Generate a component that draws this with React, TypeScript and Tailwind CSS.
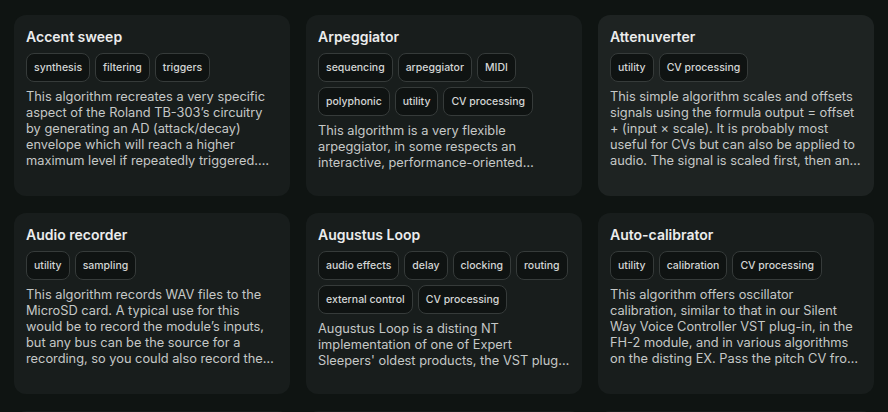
import React from "react";

type Card = { title: string; tags: string[]; desc: string; lines: number; hover?: boolean };

const cards: Card[] = [
  {
    title: "Accent sweep",
    tags: ["synthesis", "filtering", "triggers"],
    desc: "This algorithm recreates a very specific aspect of the Roland TB-303’s circuitry by generating an AD (attack/decay) envelope which will reach a higher maximum level if repeatedly triggered. The envelope is intended to be used to modulate a filter cutoff.",
    lines: 5,
  },
  {
    title: "Arpeggiator",
    tags: ["sequencing", "arpeggiator", "MIDI", "polyphonic", "utility", "CV processing"],
    desc: "This algorithm is a very flexible arpeggiator, in some respects an interactive, performance-oriented sequencer, that can be played from MIDI or CV.",
    lines: 3,
  },
  {
    title: "Attenuverter",
    tags: ["utility", "CV processing"],
    desc: "This simple algorithm scales and offsets signals using the formula output = offset + (input × scale). It is probably most useful for CVs but can also be applied to audio. The signal is scaled first, then an offset is added.",
    lines: 5,
    hover: true,
  },
  {
    title: "Audio recorder",
    tags: ["utility", "sampling"],
    desc: "This algorithm records WAV files to the MicroSD card. A typical use for this would be to record the module’s inputs, but any bus can be the source for a recording, so you could also record the module’s outputs.",
    lines: 5,
  },
  {
    title: "Augustus Loop",
    tags: ["audio effects", "delay", "clocking", "routing", "external control", "CV processing"],
    desc: "Augustus Loop is a disting NT implementation of one of Expert Sleepers' oldest products, the VST plug-in of the same name.",
    lines: 3,
  },
  {
    title: "Auto-calibrator",
    tags: ["utility", "calibration", "CV processing"],
    desc: "This algorithm offers oscillator calibration, similar to that in our Silent Way Voice Controller VST plug-in, in the FH-2 module, and in various algorithms on the disting EX. Pass the pitch CV from the module through it.",
    lines: 5,
  },
  { title: "Bit crusher", tags: ["audio effects"], desc: "Bit crushing and sample rate reduction.", lines: 5 },
  { title: "Bypass", tags: ["utility"], desc: "A simple bypass algorithm.", lines: 5 },
  { title: "Chaos", tags: ["modulation"], desc: "Chaotic modulation sources.", lines: 5 },
];

function CardView({ c }: { c: Card }) {
  return (
    <div
      className={
        "h-[181px] overflow-hidden rounded-xl p-3 flex flex-col " + (c.hover ? "bg-[#1e2322]" : "bg-[#181d1c]")
      }
    >
      <div className="text-[14px] leading-5 font-semibold text-[#ebecec]">{c.title}</div>
      <div className="mt-[6px] flex flex-wrap gap-x-[5px] gap-y-[5px]">
        {c.tags.map((t) => (
          <span
            key={t}
            className="h-[29px] px-[7px] flex items-center rounded-lg border border-[#363b3a] bg-[#0f1312] text-[10.5px] font-medium text-[#d4d6d5]"
          >
            {t}
          </span>
        ))}
      </div>
      <p
        className={
          "mt-[7px] text-[12.8px] leading-4 text-[#c5c8c7] " + (c.lines === 3 ? "line-clamp-3" : "line-clamp-5")
        }
      >
        {c.desc}
      </p>
    </div>
  );
}

export default function App() {
  return (
    <div
      className="h-screen overflow-hidden bg-[#0f1412] px-[14px] pt-[15px]"
      style={{ fontFamily: "Inter, 'Noto Sans', sans-serif" }}
    >
      <div className="grid grid-cols-3 gap-x-4 gap-y-[17px]">
        {cards.map((c) => (
          <CardView key={c.title} c={c} />
        ))}
      </div>
    </div>
  );
}
